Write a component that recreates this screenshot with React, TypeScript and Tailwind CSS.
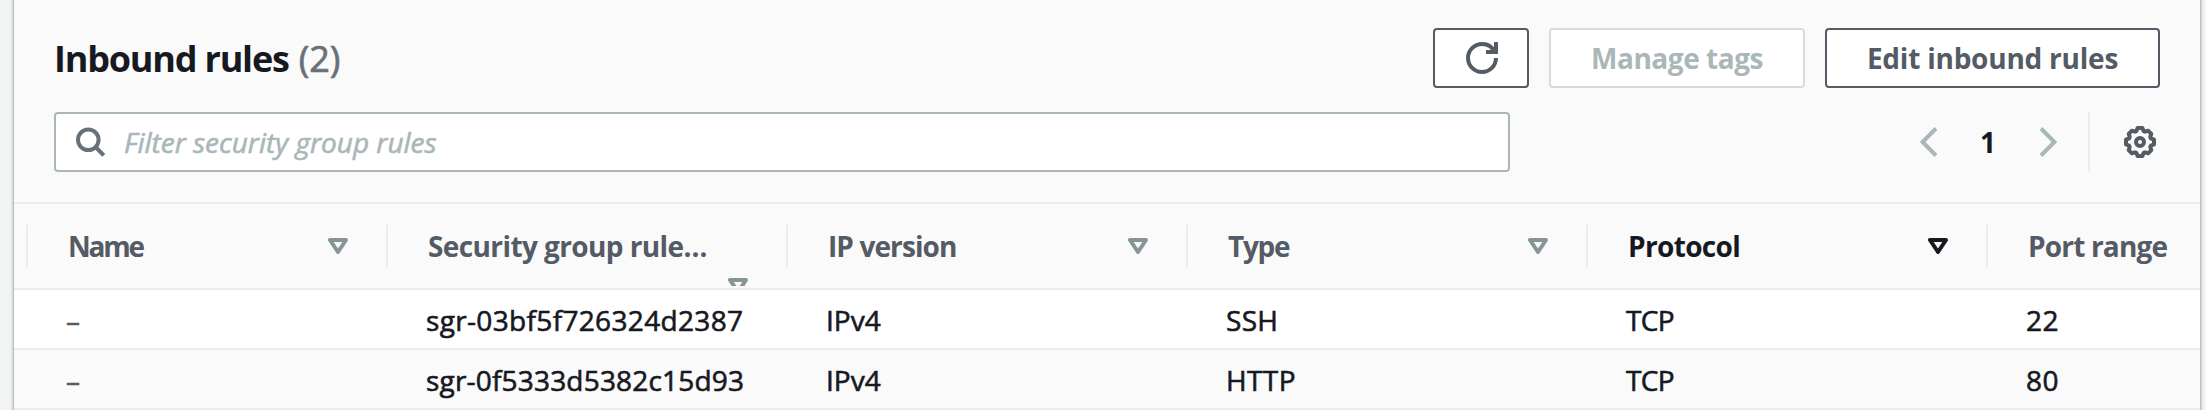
import type { ReactNode } from 'react'

const columns = [
  { label: 'Name', width: 'w-[360px]', spacing: 'tracking-[-2.2px]', sort: 'inline' },
  { label: 'Security group rule…', width: 'w-[400px]', spacing: 'tracking-[-0.6px]', sort: 'wrapped' },
  { label: 'IP version', width: 'w-[400px]', spacing: 'tracking-[-0.9px]', sort: 'inline' },
  { label: 'Type', width: 'w-[400px]', spacing: 'tracking-[-1.29px]', sort: 'inline' },
  { label: 'Protocol', width: 'w-[400px]', spacing: 'tracking-[-0.65px]', sort: 'active' },
  { label: 'Port range', width: 'w-[214px]', spacing: 'tracking-[-0.82px]', sort: 'none' },
]

const rules = [
  [
    { text: '–', spacing: '' },
    { text: 'sgr-03bf5f726324d2387', spacing: 'tracking-[0.34px]' },
    { text: 'IPv4', spacing: '' },
    { text: 'SSH', spacing: 'tracking-[0.3px]' },
    { text: 'TCP', spacing: 'tracking-[-0.7px]' },
    { text: '22', spacing: 'tracking-[0.4px]' },
  ],
  [
    { text: '–', spacing: '' },
    { text: 'sgr-0f5333d5382c15d93', spacing: 'tracking-[0.19px]' },
    { text: 'IPv4', spacing: '' },
    { text: 'HTTP', spacing: 'tracking-[0.4px]' },
    { text: 'TCP', spacing: 'tracking-[-0.7px]' },
    { text: '80', spacing: 'tracking-[0.4px]' },
  ],
]

function SortIcon({ active = false }: { active?: boolean }) {
  return (
    <svg
      viewBox="0 0 20 16"
      className={active ? 'h-4 w-5 shrink-0 text-[#16191f]' : 'h-4 w-5 shrink-0 text-[#879596]'}
      fill="none"
      stroke="currentColor"
      strokeWidth="4"
      strokeLinejoin="round"
    >
      <path d="M2 2h16l-8 12z" />
    </svg>
  )
}

function Button({ className, children }: { className: string; children: ReactNode }) {
  return (
    <button className={`flex h-[60px] items-center justify-center rounded-[4px] border-2 bg-white font-bold ${className}`}>
      {children}
    </button>
  )
}

export default function App() {
  return (
    <div className="h-[410px] overflow-hidden bg-[#f2f3f3] pr-[6px] pl-[14px] font-['Open_Sans',sans-serif] text-[28px] leading-[40px] text-[#16191f]">
      <section className="-mt-2 h-[420px] bg-[#fafafa] pt-2 shadow-[0_2px_2px_0_rgba(0,28,36,0.3),2px_2px_2px_0_rgba(0,28,36,0.15),-2px_2px_2px_0_rgba(0,28,36,0.15)]">
        <header className="flex h-[202px] flex-col gap-6 pt-7 pr-[40px] pl-[40px]">
          <div className="flex h-[60px] items-center justify-between">
            <h2 className="flex pt-[2px] text-[36px] leading-[44px] font-bold">
              <span className="tracking-[-1.2px]">Inbound rules</span>
              <span className="ml-[10px] font-normal text-[#687078] [-webkit-text-stroke:0.7px_#687078]">(2)</span>
            </h2>
            <div className="flex gap-5">
              <Button className="w-24 border-[#545b64] text-[#545b64]">
                <svg viewBox="0 0 16 16" className="ml-[2px] size-8" fill="none" stroke="currentColor" strokeWidth="2">
                  <path d="M10 5h5V0" />
                  <path d="M15 8a7 7 0 0 1-14 0 7 7 0 0 1 7-7 6.87 6.87 0 0 1 6.3 4" />
                </svg>
              </Button>
              <Button className="w-64 border-[#d5dbdb] tracking-[-0.46px] text-[#aab7b8]">Manage tags</Button>
              <Button className="w-[335px] border-[#545b64] tracking-[-0.23px] text-[#545b64]">Edit inbound rules</Button>
            </div>
          </div>
          <div className="flex h-[60px] items-center">
            <label className="flex h-[60px] w-[1456px] items-center rounded-[4px] border-2 border-[#aab7b8] bg-white pl-[19px]">
              <svg viewBox="0 0 32 32" className="size-8 shrink-0 text-[#687078]" fill="none" stroke="currentColor" strokeWidth="4">
                <circle cx="13.3" cy="13.8" r="10.3" />
                <path d="M20.5 21l8.3 8.3" />
              </svg>
              <span className="ml-[17px] text-[#aab7b8] italic [-webkit-text-stroke:0.6px_#aab7b8]">Filter security group rules</span>
            </label>
            <div className="ml-auto flex h-[60px] items-center">
              <svg viewBox="0 0 18 32" className="h-8 w-[18px] text-[#aab7b8]" fill="none" stroke="currentColor" strokeWidth="4">
                <path d="M16 2.5L2.6 16 16 29.5" />
              </svg>
              <span className="ml-[42px] w-4 font-bold">1</span>
              <svg viewBox="0 0 18 32" className="ml-[43px] h-8 w-[18px] text-[#aab7b8]" fill="none" stroke="currentColor" strokeWidth="4">
                <path d="M2 2.5L15.4 16 2 29.5" />
              </svg>
              <span className="ml-[31px] h-[60px] w-[2px] bg-[#eaeded]" />
              <svg viewBox="0 0 32 32" className="mr-1 ml-[34px] size-8 text-[#545b64]" fill="none" stroke="currentColor" strokeWidth="4" strokeLinejoin="round">
                <circle cx="16" cy="16" r="4" />
                <path d="M30 18.400L26.900 19.600 26.300 21.100 27.300 24.100 24.100 27.300 21.100 26.300 19.600 26.900 18.400 30 13.600 30 12.400 26.900 10.900 26.300 7.900 27.300 4.700 24.100 5.700 21.100 5.100 19.600 2 18.400 2 13.600 5.100 12.400 5.700 10.900 4.700 7.900 7.900 4.700 10.900 5.700 12.400 5.100 13.600 2 18.400 2 19.600 5.100 21.100 5.700 24.100 4.700 27.300 7.900 26.300 10.900 26.900 12.400 30 13.600z" />
              </svg>
            </div>
          </div>
        </header>

        <div className="flex h-[88px] border-y-2 border-[#eaeded] pl-3">
          {columns.map((column) => (
            <div key={column.label} className={`flex h-[84px] shrink-0 ${column.width}`}>
              <span className="mt-[21px] h-[42px] w-[2px] shrink-0 bg-[#eaeded]" />
              <div className="flex h-[84px] grow justify-between pr-[38px] pl-10">
                <span className={`mt-[22px] font-bold whitespace-nowrap ${column.spacing} ${column.sort === 'active' ? '' : 'text-[#545b64]'}`}>
                  {column.label}
                </span>
                {column.sort === 'inline' && <div className="mt-[34px] h-4"><SortIcon /></div>}
                {column.sort === 'active' && <div className="mt-[34px] h-4"><SortIcon active /></div>}
                {column.sort === 'wrapped' && <div className="mt-[74px] h-2 overflow-hidden"><SortIcon /></div>}
              </div>
            </div>
          ))}
        </div>

        {rules.map((rule, index) => (
          <div
            key={rule[1].text}
            className={`flex h-[60px] items-center border-b-2 border-[#eaeded] pt-px pl-3 [-webkit-text-stroke:0.6px_currentColor] ${index % 2 === 0 ? 'bg-white' : 'bg-[#fafafa]'}`}
          >
            {rule.map((cell, i) => (
              <span
                key={i}
                className={`shrink-0 pl-10 whitespace-nowrap ${columns[i].width} ${cell.spacing} ${i === 0 ? 'text-[#545b64]' : ''}`}
              >
                {cell.text}
              </span>
            ))}
          </div>
        ))}
      </section>
    </div>
  )
}
